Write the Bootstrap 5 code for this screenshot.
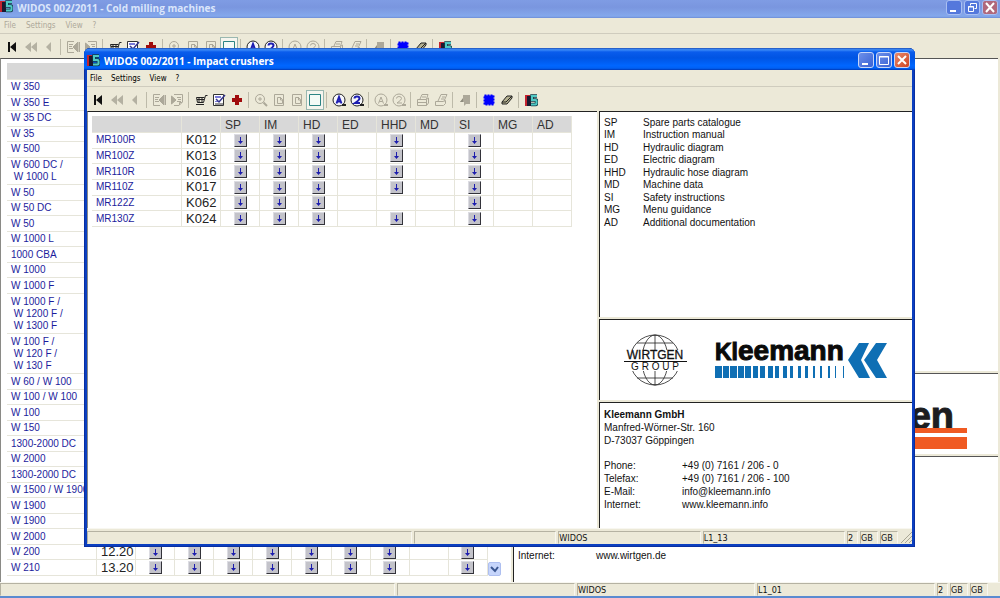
<!DOCTYPE html>
<html lang="en">
<head>
<meta charset="utf-8">
<meta name="viewport" content="width=device-width, initial-scale=1">
<title>WIDOS 002/2011</title>
<link href="https://cdn.jsdelivr.net/npm/bootstrap@5.3.0/dist/css/bootstrap.min.css" rel="stylesheet">
<style>
:root { --face: #ece9d8; --rule: #e6e5da; --link: #1c1c9c; }
body { font: 10px/12px "Liberation Sans", Arial, sans-serif; color: #111; background: var(--face); }
button { font: inherit; padding: 0; border: 0; background: none; color: inherit; }
a { color: var(--link); text-decoration: none; }
svg { display: block; }
.win { background: var(--face); }
.win-back { height: 100vh; border-bottom: 2px solid #5b8bd0; }
.win-front { position: absolute; top: 48px; right: 85px; bottom: 51px; left: 84px; background: #0b3fc0; border-radius: 6px 6px 0 0; padding: 0 3px 3px; box-shadow: inset 0 0 0 1px #0a2fa0; }
.win-front .win-body { background: var(--face); }
.title-strip { height: 18px; font: bold 10px/16px "Open Sans", sans-serif; color: #dbe6fb; background: linear-gradient(#7f9ce4, #7a96df 40%, #84a8ec 90%, #6c8cd6); padding: 0 2px 2px 0; }
.win-front .title-strip { height: 22px; line-height: 18px; color: #fff; margin: 0 -3px; border-radius: 6px 6px 0 0; padding: 4px 5px 0 3px; background: linear-gradient(#1f50b8, #3c8cf8 8%, #0a5cec 18%, #0054e3 45%, #0066ff 80%, #0060f4 92%, #0038b4); }
.title-strip h1 { font: inherit; margin: 0; }
.caps { gap: 2px; }
.cap { width: 16px; height: 16px; border: 1px solid #c8d6f8; border-radius: 3px; background: linear-gradient(135deg, #6d90ea, #3a62d4); }
.win-back .cap { height: 15px; border-color: #a9bff2; background: #5478dc; }
.cap.cap-x { background: linear-gradient(135deg, #e98a6c, #cf4320); }
.win-back .cap.cap-x { background: #b0687c; }
.menu-strip { height: 17px; font: 8px/17px "DejaVu Sans Condensed", "DejaVu Sans", sans-serif; border-bottom: 1px solid #cfccbe; padding-left: 3px; gap: 9px; }
.menu-strip button { color: #000; line-height: 17px; }
.win-back .menu-strip { height: 16px; padding-left: 4px; gap: 10px; }
.win-back .menu-strip button { color: #aca899; line-height: 15px; }
.tool-strip { height: 24px; padding: 3px 0 0 3px; }
.win-back .tool-strip { padding: 3px 0 0 4px; }
.tool { width: 18px; height: 20px; display: grid; place-items: center; color: #aca899; }
.tool.pressed { background: #f6f5ee; border: 1px solid #9ab8b0; }
.sep { width: 1px; height: 16px; background: #bdbaa9; margin: 2px 3px 0 2px; }
.panes { gap: 2px; min-height: 0; }
.pane { background: #fff; border-top: 1px solid #222; border-left: 1px solid #222; }
.pane-left { width: 510px; border-left-color: #8a8a86; padding: 4px 0 6px 4px; }
.win-back .pane { border-top-color: #555; }
.win-back .pane-left { width: 511px; padding: 4px 0 6px 6px; }
.win-back .pane-stack { margin-right: 2px; }
.pane-stack { gap: 2px; }
.pane-logo { height: 81px; }
.pane-address { height: 126px; padding: 5px 4px 4px; line-height: 13px; }
.machines { table-layout: fixed; border-collapse: separate; border-spacing: 0; width: 480px; height: 111px; }
.win-back .machines { height: 100%; width: 481px; }
.machines col.c-name { width: 90px; }
.machines th, .machines td { border-right: 1px solid var(--rule); border-bottom: 1px solid var(--rule); padding: 1px 0 1px 4px; height: 15px; line-height: 12px; vertical-align: middle; white-space: nowrap; }
.machines th { background: #d8d8d8; font-weight: normal; font-size: 12px; color: #333; height: 17px; padding-top: 2px; }
.machines td.code { font-size: 13px; color: #222; }
.machines td.slot { padding: 0; }
.down { display: block; margin: 0 auto; width: 13px; height: 13px; background: #c3c3ca; border: 1px solid; border-color: #dcdce2 #33333a #33333a #dcdce2; }
.scroll-down { width: 13px; height: 14px; background: #c6d5fb; border: 1px solid #aebff0; border-radius: 2px; }
.legend-list { display: grid; grid-template-columns: 39px auto; justify-content: start; margin: 0; padding: 5px 4px; line-height: 12px; row-gap: 0; }
.legend-list dt, .legend-list dd { margin: 0; font-weight: normal; height: 12px; }
.legend-list > :nth-child(4n) , .legend-list > :nth-child(4n-1) { height: 13px; }
.contact { display: grid; grid-template-columns: 78px auto; justify-content: start; margin: 0; line-height: 13px; }
.contact dt, .contact dd { margin: 0; font-weight: normal; }
.contact a { color: #111; }
.status-strip { height: 16px; padding-top: 2px; font: 9px/13px "DejaVu Sans Condensed", "DejaVu Sans", sans-serif; gap: 2px; border-top: 1px solid #f8f7f0; }
.status-strip span { border: 1px solid; border-color: #b5b2a2 #f8f7f0 transparent #b5b2a2; line-height: 13px; overflow: hidden; white-space: nowrap; }
.s-num { width: 11px; } .s-lang { width: 18px; }
.win-front .s-wide { flex: 0 0 325px; }
.win-back .s-wide { flex: 0 0 395px; }
.win-back .status-strip { height: 14px; padding-top: 0; padding-right: 12px; }
.brand { font-family: "Liberation Sans", Arial, sans-serif; }
</style>
</head>
<body>

<svg width="0" height="0" class="position-absolute" aria-hidden="true">
  <symbol id="i-app" viewBox="0 0 13 13"><path d="M0 1h5v11H0z" fill="#c4232f"/><path d="M2 2h4v10H2z" fill="#1a1a30"/><path d="M12 2H7v4h3.500a1 1 0 0 1 1 1v2.500a1 1 0 0 1-1 1H6" fill="none" stroke="#123c48" stroke-width="3.500"/><path d="M12 2H7v4h3.500a1 1 0 0 1 1 1v2.500a1 1 0 0 1-1 1H6" fill="none" stroke="#4fc9c4" stroke-width="2"/></symbol>
  <symbol id="i-down" viewBox="0 0 11 11"><path d="M5 2h1v4h2L5.500 9 3 6h2z" fill="#1d1dae"/></symbol>
  <symbol id="i-page" viewBox="0 0 14 14"><path d="M2.500 1.500h9v11h-9z" fill="none" stroke="currentColor"/><path d="M5.500 4.500h3l2 2v4h-5zM8.500 4v3h2" fill="none" stroke="currentColor"/></symbol>
</svg>

<template id="tools">
  <button class="tool" aria-label="First"><svg width="14" height="14"><path d="M2 2h2v10H2zM10 2v10L4 7z" fill="#111"/></svg></button>
  <button class="tool" aria-label="Fast back"><svg width="14" height="14"><path d="M7 2v10L1 7zM13 2v10L7 7z" fill="#b4b1a2"/></svg></button>
  <button class="tool" aria-label="Back"><svg width="14" height="14"><path d="M9 2v10L4 7z" fill="#b4b1a2"/></svg></button>
  <i class="sep"></i>
  <button class="tool" aria-label="Previous document"><svg width="14" height="14" fill="none" stroke="currentColor"><path d="M8 12.500H1.500v-11H8M3 4.500h4M3 6.500h3M3 8.500h4"/><path d="M12 2v10L7 7zM13.500 2v10" fill="currentColor"/></svg></button>
  <button class="tool" aria-label="Next document"><svg width="14" height="14" fill="none" stroke="currentColor"><path d="M4 1.500h8.500V9L9 12.500H4M7 4.500h4M8 6.500h3M7 8.500h4M9.500 12V9.500H12"/><path d="M1.500 3v8L6 7z" fill="currentColor"/></svg></button>
  <i class="sep"></i>
  <button class="tool" aria-label="Cart"><svg width="14" height="14" fill="none" stroke="#222"><path d="M13.500 2.500h-2l-2 7h-6l-1-5h8M3 6.500h7M5 4v5M8 4v5"/><path d="M2 11.500h8"/></svg></button>
  <button class="tool" aria-label="Order form"><svg width="14" height="14"><path d="M1.500 1.500h10v11h-10z" fill="#fff" stroke="#333"/><path d="M3 3h6v2H3zM3 8h4v1H3z" fill="#7a7ad8"/><path d="M4 6l3 3 6-7" fill="none" stroke="#34348c" stroke-width="1.500"/><path d="M3 11h9" stroke="#333"/></svg></button>
  <button class="tool" aria-label="Add"><svg width="14" height="14"><path d="M5 2h4v3h3v4H9v3H5V9H2V5h3z" fill="#a00c0c"/></svg></button>
  <i class="sep"></i>
  <button class="tool" aria-label="Zoom"><svg width="14" height="14" fill="none" stroke="currentColor"><circle cx="6" cy="6" r="4.500"/><path d="M4 6h4M6 4v4"/><path d="M9.500 9.500L13 13" stroke-width="2"/></svg></button>
  <button class="tool" aria-label="Fit page"><svg width="14" height="14"><use href="#i-page"/></svg></button>
  <button class="tool" aria-label="Fit width"><svg width="14" height="14"><use href="#i-page"/></svg></button>
  <button class="tool pressed" aria-label="Full view"><svg width="14" height="14"><path d="M1.500 1.500h11v11h-11z" fill="#f4faf6" stroke="#2c8484"/></svg></button>
  <i class="sep"></i>
  <button class="tool" aria-label="Search A"><svg width="14" height="14" fill="none"><circle cx="7" cy="7" r="6" fill="#f6f6fa" stroke="#222"/><path d="M10 12h4" stroke="#222" stroke-width="2"/><path d="M4.500 10.500L7 4l2.500 6.500M5.500 8.500h3" stroke="#1c1cb0" stroke-width="2"/></svg></button>
  <button class="tool" aria-label="Search 2"><svg width="14" height="14" fill="none"><circle cx="7" cy="7" r="6" fill="#f6f6fa" stroke="#222"/><path d="M10 12h4" stroke="#222" stroke-width="2"/><path d="M4.500 5.500q0-2 2.500-2t2.500 2q0 1.500-4.500 4.500h5" stroke="#1c1cb0" stroke-width="2"/></svg></button>
  <i class="sep"></i>
  <button class="tool" aria-label="Search A again"><svg width="14" height="14" fill="none" stroke="currentColor"><circle cx="7" cy="7" r="6"/><path d="M10 12h4" stroke-width="2"/><path d="M4.500 10.500L7 4l2.500 6.500M5.500 8.500h3"/></svg></button>
  <button class="tool" aria-label="Search 2 again"><svg width="14" height="14" fill="none" stroke="currentColor"><circle cx="7" cy="7" r="6"/><path d="M10 12h4" stroke-width="2"/><path d="M4.500 5.500q0-2 2.500-2t2.500 2q0 1.500-4.500 4.500h5"/></svg></button>
  <i class="sep"></i>
  <button class="tool" aria-label="Print"><svg width="14" height="14" fill="none" stroke="currentColor"><path d="M4 6l2-4.500h6L10.500 6M1.500 6.500h9l2-1.500v5l-2 2.500h-9zM10.500 6.500v6M2 9.500h8M6 4h4"/></svg></button>
  <button class="tool" aria-label="Print page"><svg width="14" height="14" fill="none" stroke="currentColor"><path d="M4 8l3-6.500h6L10 8M1.500 8.500h8l2-1v3l-2 2h-8zM8 4h3M7 6h3"/></svg></button>
  <i class="sep"></i>
  <button class="tool" aria-label="Copy"><svg width="14" height="14"><path d="M5 2h7v9H8l-2 2V9H2l3-3z" fill="#aca899"/><path d="M2 9l3-4v4z" fill="#8f8c7e"/></svg></button>
  <i class="sep"></i>
  <button class="tool" aria-label="Select area"><svg width="14" height="14"><path d="M2.500 2.500h9v9h-9z" fill="#00f" stroke="#00f" stroke-width="2" stroke-dasharray="2 1"/></svg></button>
  <button class="tool" aria-label="Erase"><svg width="14" height="14"><path d="M2 9l5-6h5v2l-5 6H2z" fill="#b5b190" stroke="#222"/><path d="M2 9h4l6-6" fill="none" stroke="#222"/></svg></button>
  <i class="sep"></i>
  <button class="tool" aria-label="WIDOS"><svg width="13" height="13"><use href="#i-app"/></svg></button>
</template>

<main class="win win-back d-flex flex-column overflow-hidden">
  <header class="title-strip d-flex align-items-start gap-1">
    <svg width="13" height="13"><use href="#i-app"/></svg>
    <h1 class="flex-grow-1">WIDOS 002/2011 - Cold milling machines</h1>
    <div class="caps d-flex">
      <button class="cap" aria-label="Minimize"><svg width="14" height="13"><path d="M3 9h6v2H3z" fill="#fff"/></svg></button>
      <button class="cap" aria-label="Restore"><svg width="14" height="13" fill="none" stroke="#fff"><path d="M5.500 4.500v-2h6v5h-2M3.500 5.500h5v5h-5zM3 6h6"/></svg></button>
      <button class="cap cap-x" aria-label="Close"><svg width="14" height="13"><path d="M3 2l8 9M11 2l-8 9" stroke="#fff" stroke-width="2"/></svg></button>
    </div>
  </header>
  <nav class="menu-strip d-flex"><button>File</button><button>Settings</button><button>View</button><button>?</button></nav>
  <div class="tool-strip d-flex"></div>
  <div class="panes d-flex flex-grow-1">
    <section class="pane pane-left d-flex flex-shrink-0">
      <table class="machines" id="milling"></table>
      <button class="scroll-down align-self-end" aria-label="Scroll down"><svg width="11" height="12"><path d="M2 4l4 4 3-4" fill="none" stroke="#3a5690" stroke-width="2"/></svg></button>
    </section>
    <div class="pane-stack d-flex flex-column flex-grow-1">
      <section class="pane flex-grow-1"></section>
      <section class="pane pane-logo d-flex justify-content-end pe-2">
        <svg class="brand" width="240" height="80" role="img" aria-label="wirtgen">
          <text x="204" y="55" text-anchor="end" font-size="38" font-weight="bold" fill="#1d1d1f" stroke="#1d1d1f">wirtgen</text>
          <path d="M60 54h157v5H60zM60 63h157v12H60z" fill="#f05a22"/>
        </svg>
      </section>
      <section class="pane pane-address d-flex flex-column justify-content-end">
        <dl class="contact mb-3"><dt>Internet:</dt><dd><a href="#">www.wirtgen.de</a></dd></dl>
      </section>
    </div>
  </div>
  <footer class="status-strip d-flex"><span class="s-wide"></span><span class="flex-fill w-25"></span><span class="flex-fill w-25">WIDOS</span><span class="flex-fill w-25">L1_01</span><span class="s-num flex-shrink-0">2</span><span class="s-lang flex-shrink-0">GB</span><span class="s-lang flex-shrink-0">GB</span></footer>
</main>

<section class="win-front d-flex flex-column">
  <header class="title-strip d-flex align-items-start gap-1">
    <svg width="13" height="16" viewBox="0 -2 13 16"><use href="#i-app" width="13" height="13"/></svg>
    <h1 class="flex-grow-1">WIDOS 002/2011 - Impact crushers</h1>
    <div class="caps d-flex">
      <button class="cap" aria-label="Minimize"><svg width="14" height="14"><path d="M3 10h6v2H3z" fill="#fff"/></svg></button>
      <button class="cap" aria-label="Maximize"><svg width="14" height="14" fill="none" stroke="#fff"><path d="M2.500 3.500h9v8h-9zM2 4h10"/></svg></button>
      <button class="cap cap-x" aria-label="Close"><svg width="14" height="14"><path d="M3 3l8 8M11 3l-8 8" stroke="#fff" stroke-width="2"/></svg></button>
    </div>
  </header>
  <div class="win-body d-flex flex-column flex-grow-1">
    <nav class="menu-strip d-flex"><button>File</button><button>Settings</button><button>View</button><button>?</button></nav>
    <div class="tool-strip d-flex"></div>
    <div class="panes d-flex flex-grow-1">
      <section class="pane pane-left flex-shrink-0"><table class="machines" id="crushers"></table></section>
      <div class="pane-stack d-flex flex-column flex-grow-1">
        <section class="pane flex-grow-1">
          <dl class="legend-list">
            <dt>SP</dt><dd>Spare parts catalogue</dd>
            <dt>IM</dt><dd>Instruction manual</dd>
            <dt>HD</dt><dd>Hydraulic diagram</dd>
            <dt>ED</dt><dd>Electric diagram</dd>
            <dt>HHD</dt><dd>Hydraulic hose diagram</dd>
            <dt>MD</dt><dd>Machine data</dd>
            <dt>SI</dt><dd>Safety instructions</dd>
            <dt>MG</dt><dd>Menu guidance</dd>
            <dt>AD</dt><dd>Additional documentation</dd>
          </dl>
        </section>
        <section class="pane pane-logo d-flex align-items-center justify-content-between ps-4 pe-4">
          <svg class="brand" width="64" height="54" role="img" aria-label="Wirtgen Group">
            <g fill="none" stroke="#222" stroke-width=".8"><circle cx="31" cy="27" r="25"/><ellipse cx="31" cy="27" rx="13" ry="25"/><path d="M31 2v50M13 10h36M13 45h36"/></g>
            <path d="M0 17h63v21H0z" fill="#fff"/><path d="M0 28.500h63" stroke="#111"/>
            <text x="31" y="26" text-anchor="middle" font-size="12" fill="#111" stroke="#111" stroke-width=".3">WIRTGEN</text>
            <text x="31" y="37" text-anchor="middle" font-size="10" fill="#111">G R O U P</text>
          </svg>
          <svg class="brand" width="173" height="60" viewBox="0 -10 173 60" role="img" aria-label="Kleemann">
            <text x="0" y="20" font-size="23" font-weight="bold" fill="#0a0a0a" stroke="#0a0a0a">Kl<tspan font-size="28">eemann</tspan></text>
            <path d="M0 26h7v12H0zM8 26h6v12H8zM15 26h7v12h-7zM23 26h6v12h-6zM30 26h6v12h-6zM38 26h5v12h-5zM45 26h5v12h-5zM53 26h5v12h-5zM60 26h4v12h-4zM68 26h4v12h-4zM75 26h3v12h-3zM83 26h3v12h-3zM90 26h3v12h-3zM98 26h2v12h-2zM105 26h2v12h-2zM113 26h2v12h-2zM120 26h1v12h-1zM128 26h1v12h-1z" fill="#0f6fb4"/>
            <path d="M133 20L144 3h10L146 20l9 18h-11zM149 20L161 3h11L162 20l10 18h-11z" fill="#0f6fb4"/>
          </svg>
        </section>
        <section class="pane pane-address">
          <strong>Kleemann GmbH</strong><br>Manfred-Wörner-Str. 160<br>D-73037 Göppingen
          <dl class="contact pt-2 mt-1">
            <dt>Phone:</dt><dd>+49 (0) 7161 / 206 - 0</dd>
            <dt>Telefax:</dt><dd>+49 (0) 7161 / 206 - 100</dd>
            <dt>E-Mail:</dt><dd><a href="#">info@kleemann.info</a></dd>
            <dt>Internet:</dt><dd><a href="#">www.kleemann.info</a></dd>
          </dl>
        </section>
      </div>
    </div>
    <footer class="status-strip d-flex"><span class="s-wide"></span><span class="flex-fill w-25"></span><span class="flex-fill w-25">WIDOS</span><span class="flex-fill w-25">L1_13</span><span class="s-num flex-shrink-0">2</span><span class="s-lang flex-shrink-0">GB</span><span class="s-lang flex-shrink-0">GB</span><svg width="12" height="12" class="flex-shrink-0" stroke="#a9a694"><path d="M1 12L12 1M5 12l7-7M9 12l3-3"/></svg></footer>
  </div>
</section>

<script src="https://cdn.jsdelivr.net/npm/bootstrap@5.3.0/dist/js/bootstrap.bundle.min.js"></script>
<script>
const DOCS = ['SP', 'IM', 'HD', 'ED', 'HHD', 'MD', 'SI', 'MG', 'AD'];
// Each row: name, type code, one character per document column (x = available)
const crushers = [
  ['MR100R', 'K012', 'xxx.x.x..'], ['MR100Z', 'K013', 'xxx.x.x..'], ['MR110R', 'K016', 'xxx.x.x..'],
  ['MR110Z', 'K017', 'xxx.x.x..'], ['MR122Z', 'K062', 'xxx...x..'], ['MR130Z', 'K024', 'xxx.x.x..']
];
const milling = ['W 350', 'W 350 E', 'W 35 DC', 'W 35', 'W 500', 'W 600 DC /|W 1000 L', 'W 50', 'W 50 DC', 'W 50',
  'W 1000 L', '1000 CBA', 'W 1000', 'W 1000 F', 'W 1000 F /|W 1200 F /|W 1300 F', 'W 100 F /|W 120 F /|W 130 F',
  'W 60 / W 100', 'W 100 / W 100', 'W 100', 'W 150', '1300-2000 DC', 'W 2000', '1300-2000 DC', 'W 1500 / W 1900',
  'W 1900', 'W 1900', 'W 2000'].map(n => [n, '', '.........'])
  .concat([['W 200', '12.20', 'xxxxxxx.x'], ['W 210', '13.20', 'xxxxxxx.x']]);

function fill(id, rows, heads) {
  const cols = '<colgroup><col class="c-name">' + '<col>'.repeat(10) + '</colgroup>';
  const head = '<thead><tr><th></th><th></th>' + heads.map(h => `<th>${h}</th>`).join('') + '</tr></thead>';
  const slot = (c, i, n) => '<td class="slot">' + (c === 'x'
    ? `<button class="down" aria-label="${n} ${DOCS[i]}"><svg width="11" height="11"><use href="#i-down"/></svg></button>` : '') + '</td>';
  document.getElementById(id).innerHTML = cols + head + '<tbody>' + rows.map(([n, k, s]) =>
    `<tr><td><a href="#">${n.replace(/\|/g, '<br>&nbsp;')}</a></td><td class="code">${k}</td>${[...s].map((c, i) => slot(c, i, n.replace(/\|/g, ' '))).join('')}</tr>`).join('') + '</tbody>';
}
fill('crushers', crushers, DOCS);
fill('milling', milling, DOCS.map(() => ''));
document.querySelectorAll('.tool-strip').forEach(s => s.append(document.getElementById('tools').content.cloneNode(true)));
</script>
</body>
</html>
